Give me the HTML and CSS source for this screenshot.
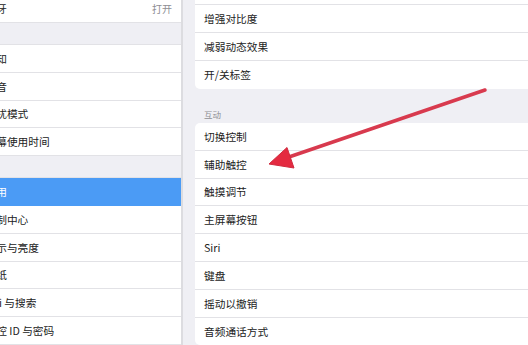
FILE: index.html
```html
<!DOCTYPE html>
<html lang="zh-CN">
<head>
  <meta charset="UTF-8" />
  <meta name="viewport" content="width=device-width, initial-scale=1.0"/>
  <title>设置 - 辅助功能</title>
  <link rel="stylesheet" href="styles.css">
</head>
<body>
  <div class="screen">
    <div class="sidebar">
      <div class="row"><span class="label">蓝牙</span><span class="value">打开</span></div>
      <div class="band"></div>
      <div class="row"><span class="label">通知</span></div>
      <div class="row"><span class="label">声音</span></div>
      <div class="row"><span class="label">勿扰模式</span></div>
      <div class="row"><span class="label">屏幕使用时间</span></div>
      <div class="band"></div>
      <div class="row active"><span class="label">通用</span></div>
      <div class="row"><span class="label">控制中心</span></div>
      <div class="row"><span class="label">显示与亮度</span></div>
      <div class="row"><span class="label">墙纸</span></div>
      <div class="row"><span class="label">Siri 与搜索</span></div>
      <div class="row"><span class="label">触控 ID 与密码</span></div>
    </div>

    <div class="detail">
      <div class="card first">
        <div class="item"></div>
        <div class="item">增强对比度</div>
        <div class="item">减弱动态效果</div>
        <div class="item">开/关标签</div>
      </div>

      <div class="section-title">互动</div>

      <div class="card">
        <div class="item">切换控制</div>
        <div class="item">辅助触控</div>
        <div class="item">触摸调节</div>
        <div class="item">主屏幕按钮</div>
        <div class="item">Siri</div>
        <div class="item">键盘</div>
        <div class="item">摇动以撤销</div>
        <div class="item">音频通话方式</div>
      </div>
    </div>

    <svg class="arrow" width="528" height="345" viewBox="0 0 528 345">
      <line x1="485" y1="90" x2="286" y2="158" stroke="#d83a4e" stroke-width="3.5" stroke-linecap="round"/>
      <polygon points="269,164 287,147.5 294,168" fill="#e42a40" stroke="#d02a3e" stroke-width="1" stroke-linejoin="round"/>
    </svg>
  </div>
</body>
</html>
```

FILE: styles.css
```css
:root {
  --group-bg: #efeff4;
  --line: #e2e2e6;
  --text: #222;
  --muted: #8e8e93;
  --accent: #4b9bf5;
}

body {
  margin: 0;
  padding: 0;
  font-family: "Noto Sans CJK SC", "Noto Sans", sans-serif;
  font-size: 10.7px;
  color: var(--text);
  background: var(--group-bg);
}

.screen {
  position: relative;
  display: flex;
  width: 528px;
  height: 345px;
  overflow: hidden;
}

/* left column, cut off on its left side */
.sidebar {
  width: 181px;
  flex-shrink: 0;
  background: #fff;
  border-right: 2px solid #dcdce0;
  margin-top: -4.8px;
  overflow: hidden;
}

.row {
  height: 27.8px;
  box-sizing: border-box;
  display: flex;
  align-items: center;
  justify-content: space-between;
  padding-right: 9px;
  border-bottom: 1px solid var(--line);
  white-space: nowrap;
}

.row .label {
  margin-left: -14.5px;
}

.row .value {
  color: var(--muted);
  font-size: 10px;
}

.row.active {
  background: var(--accent);
  color: #fff;
  border-bottom-color: var(--accent);
}

.band {
  height: 22px;
  background: var(--group-bg);
  border-bottom: 1px solid var(--line);
  box-sizing: border-box;
}

/* right column */
.detail {
  flex: 1;
  padding-left: 12px;
  background: var(--group-bg);
}

.card {
  background: #fff;
  border-radius: 5px 0 0 5px;
}

.card.first {
  margin-top: -22.6px;
}

.item {
  height: 27.8px;
  box-sizing: border-box;
  display: flex;
  align-items: center;
  padding-left: 9px;
  border-bottom: 1px solid var(--line);
}

.item:last-child {
  border-bottom: none;
}

.section-title {
  height: 34.4px;
  box-sizing: border-box;
  display: flex;
  align-items: flex-end;
  padding: 0 0 3px 9px;
  font-size: 8.5px;
  color: var(--muted);
}

.arrow {
  position: absolute;
  top: 0;
  left: 0;
  pointer-events: none;
}
```
